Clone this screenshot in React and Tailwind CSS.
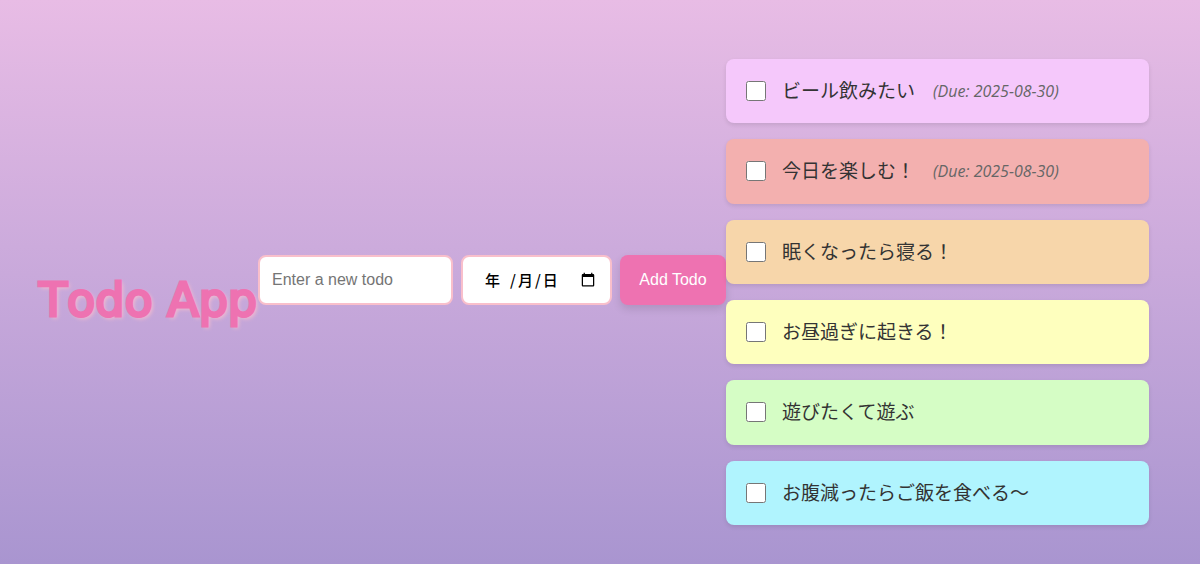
import React, { useState } from "react";

const initialTodos = [
    { id: 1, text: "ビール飲みたい", due: "2025-08-30", color: "bg-[#f5c8fb]" },
    { id: 2, text: "今日を楽しむ！", due: "2025-08-30", color: "bg-[#f3b0af]" },
    { id: 3, text: "眠くなったら寝る！", due: "", color: "bg-[#f7d6aa]" },
    { id: 4, text: "お昼過ぎに起きる！", due: "", color: "bg-[#feffbe]" },
    { id: 5, text: "遊びたくて遊ぶ", due: "", color: "bg-[#d5fdc5]" },
    { id: 6, text: "お腹減ったらご飯を食べる〜", due: "", color: "bg-[#b0f4fe]" },
];

const colors = initialTodos.map((todo) => todo.color);

const TodoForm = ({ onAdd }) => {
    const [text, setText] = useState("");
    const [due, setDue] = useState("");

    const handleSubmit = (e) => {
        e.preventDefault();
        if (!text.trim()) return;
        onAdd(text, due);
        setText("");
        setDue("");
    };

    return (
        <form
            onSubmit={handleSubmit}
            className="mb-10 flex h-[50px] shrink-0 gap-2 font-['Liberation_Sans','Noto_Sans_CJK_JP',sans-serif] text-base"
        >
            <input
                type="text"
                aria-label="New todo"
                placeholder="Enter a new todo"
                value={text}
                onChange={(e) => setText(e.target.value)}
                className="w-[195px] rounded-lg border-2 border-[#f9bfcb] bg-white px-3 placeholder:text-[#757575]"
            />
            <label className="relative flex">
                <input
                    type="date"
                    aria-label="Due date"
                    value={due}
                    onChange={(e) => setDue(e.target.value)}
                    className={`w-[151px] rounded-lg border-2 border-[#f9bfcb] bg-white px-3 ${
                        due ? "" : "[&::-webkit-datetime-edit]:opacity-0"
                    }`}
                />
                {!due && (
                    <span className="pointer-events-none absolute inset-y-0 left-6 flex items-center gap-0.5 font-['Noto_Sans_CJK_JP',sans-serif] text-[15px] font-medium text-black">
                        <span className="mr-2">年</span>
                        <span>/</span>
                        <span>月</span>
                        <span>/</span>
                        <span>日</span>
                    </span>
                )}
            </label>
            <button
                type="submit"
                className="w-[106px] cursor-pointer rounded-lg bg-[#ee72b1] text-white shadow-[0_4px_8px_rgba(0,0,0,0.12)] hover:bg-pink-500"
            >
                Add Todo
            </button>
        </form>
    );
};

const TodoItem = ({ todo }) => (
    <li
        className={`flex flex-1 items-center rounded-lg px-5 py-4 shadow-[0_2px_4px_rgba(0,0,0,0.1)] ${todo.color}`}
    >
        <label className="flex items-center gap-4">
            <input type="checkbox" className="size-5 shrink-0" />
            <span className="text-[19px] text-[#333]">{todo.text}</span>
        </label>
        {todo.due && (
            <span className="ml-[18px] text-base font-medium text-[#666] italic">
                (Due: {todo.due})
            </span>
        )}
    </li>
);

const App = () => {
    const [todos, setTodos] = useState(initialTodos);

    const addTodo = (text, due) => {
        const color = colors[todos.length % colors.length];
        setTodos([...todos, { id: Date.now(), text, due, color }]);
    };

    return (
        <div
            lang="ja"
            className="flex min-h-screen items-center bg-linear-to-b from-[#e8bce5] to-[#a995d0] pt-9 pr-[51px] pl-[38px] font-['Comic_Sans_MS','Open_Sans','Noto_Sans_CJK_JP',sans-serif]"
        >
            <h1 className="w-[220px] shrink-0 text-center font-['Comic_Sans_MS','DejaVu_Sans',sans-serif] text-[46px] leading-[70px] font-normal whitespace-nowrap text-[#ee72b1] [-webkit-text-stroke:3px_#ee72b1] [font-kerning:none] [text-shadow:2px_2px_4px_#ffc0cb]">
                Todo App
            </h1>
            <TodoForm onAdd={addTodo} />
            <ul className="mb-4 flex min-h-[466px] flex-1 flex-col gap-4">
                {todos.map((todo) => (
                    <TodoItem key={todo.id} todo={todo} />
                ))}
            </ul>
        </div>
    );
};

export default App;
